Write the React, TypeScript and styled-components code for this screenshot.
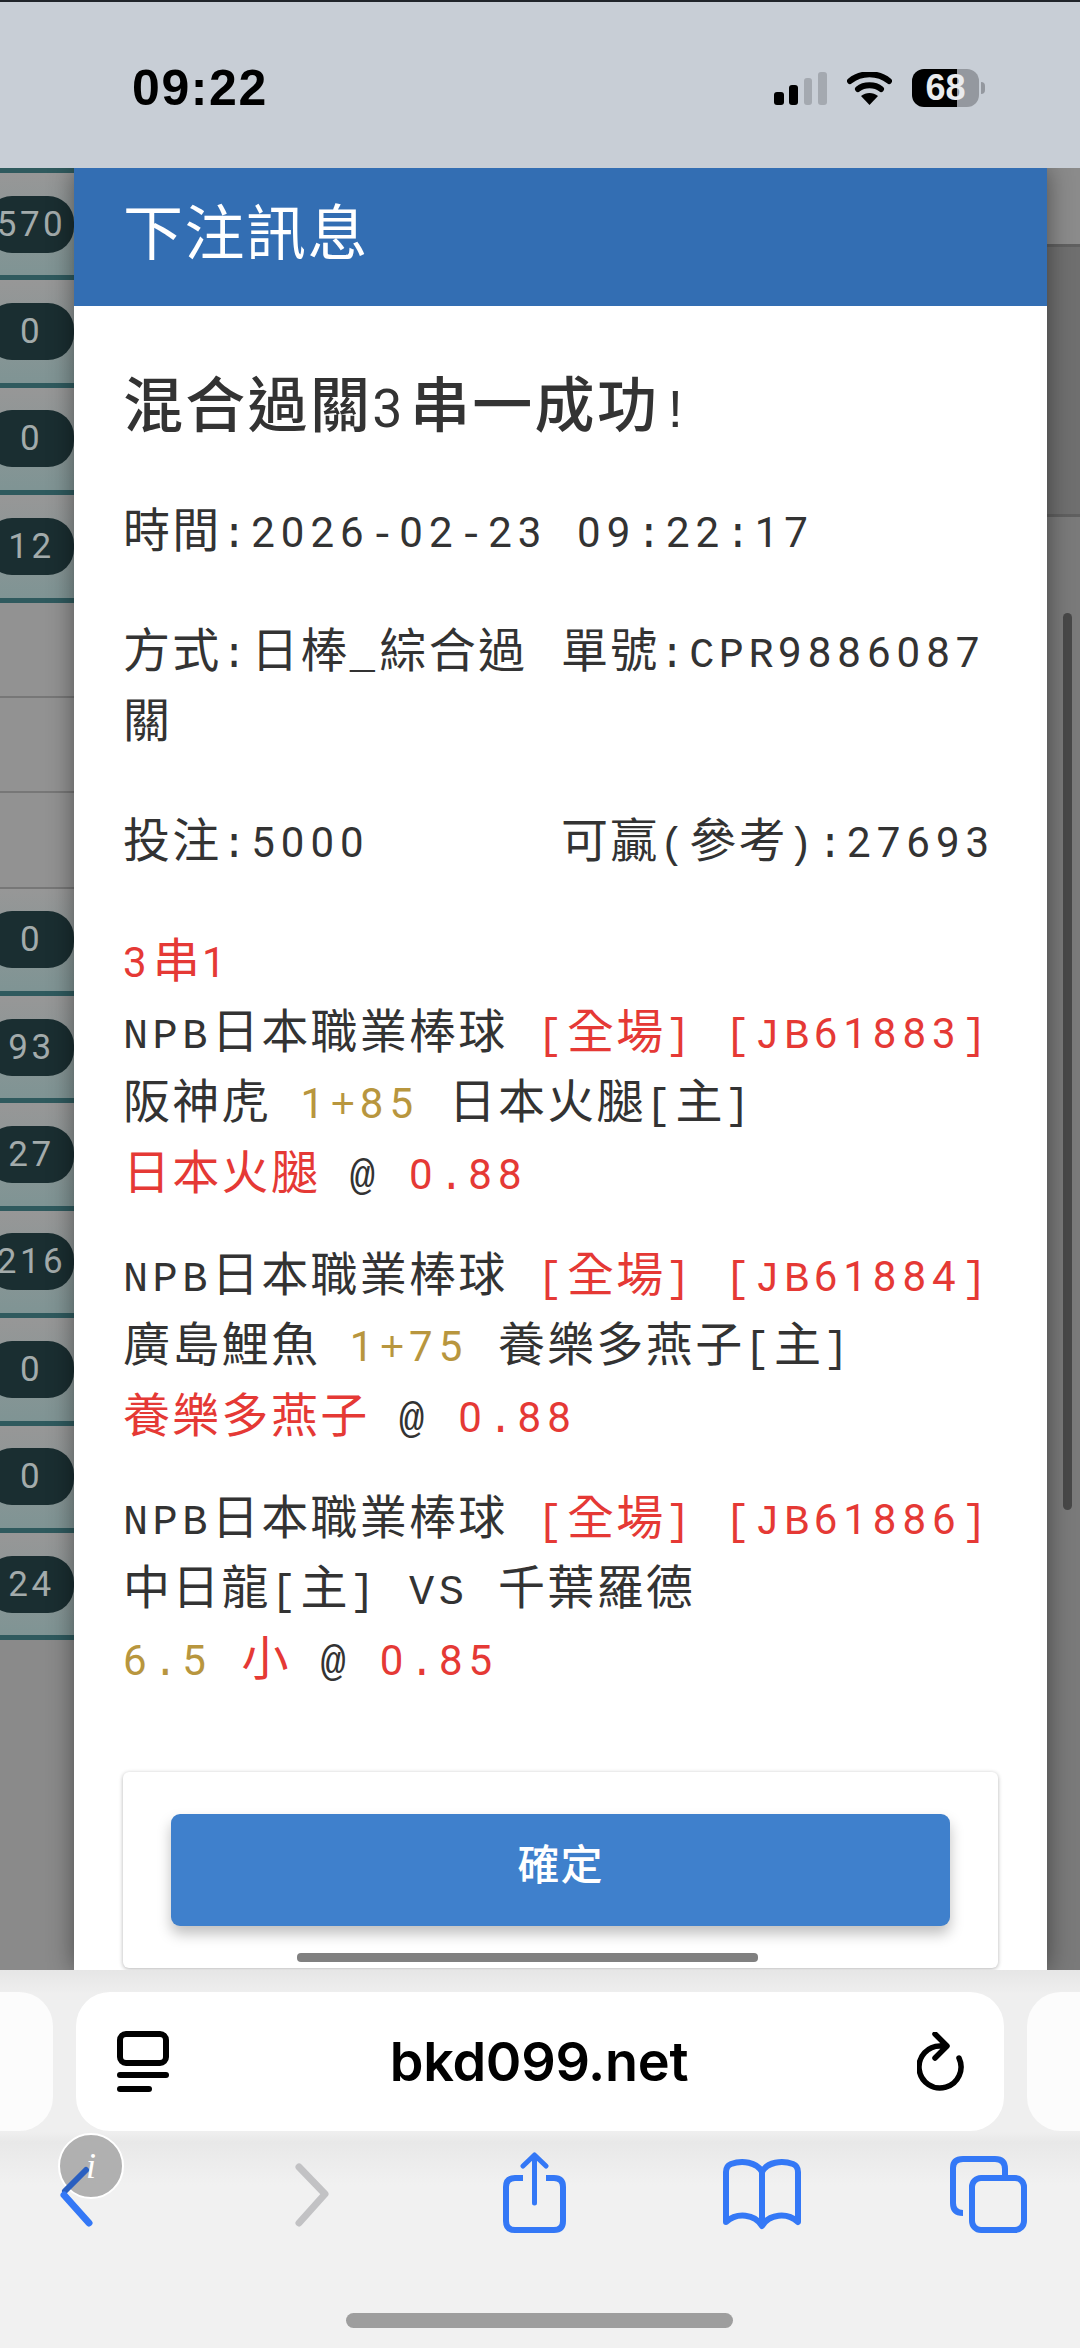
import React from "react";
import styled, { createGlobalStyle } from "styled-components";

const cjk = `"Noto Sans CJK TC", "Noto Sans CJK SC", sans-serif`;

const GlobalStyle = createGlobalStyle`
  html, body {
    margin: 0;
    padding: 0;
    background: #f1f1f1;
  }
  * {
    box-sizing: border-box;
  }
`;

const Page = styled.div`
  width: 1080px;
  height: 2348px;
  display: flex;
  flex-direction: column;
  overflow: hidden;
  font-family: ${cjk};
`;

/* status bar */
const StatusBar = styled.div`
  height: 168px;
  flex: none;
  background: #c8ced6;
  border-top: 2px solid #20242a;
  padding: 67px 101px 0 132px;
  display: flex;
  justify-content: space-between;
  align-items: flex-start;
`;
const Clock = styled.div`
  font: 700 50px/38px "Liberation Sans", sans-serif;
  letter-spacing: 1.6px;
  color: #000;
`;
const StatusIcons = styled.div`
  display: flex;
  align-items: center;
  gap: 20px;
  height: 38px;
`;
const Battery = styled.div`
  position: relative;
  width: 67px;
  height: 38px;
  border-radius: 12px;
  background: linear-gradient(90deg, #000 67%, #94989f 67%);
  color: #e9ebee;
  font: 700 36px/38px "Liberation Sans", sans-serif;
  text-align: center;
  &::after {
    content: "";
    position: absolute;
    left: 69px;
    top: 13px;
    width: 4px;
    height: 12px;
    border-radius: 0 6px 6px 0;
    background: #94989f;
  }
`;

/* dimmed page behind the dialog */
const Main = styled.div`
  height: 1802px;
  flex: none;
  display: flex;
  overflow: hidden;
`;
const LeftStrip = styled.div`
  width: 74px;
  flex: none;
  display: flex;
  flex-direction: column;
  overflow: hidden;
  background: #8a8a8a;
  border-top: 5px solid #2f5a5e;
`;
const ScoreRow = styled.div`
  height: 107.4px;
  flex: none;
  display: flex;
  align-items: center;
  border-bottom: 5px solid #2f5a5e;
  background: linear-gradient(#979797, #7f9494);
`;
const Pill = styled.div`
  width: 88px;
  height: 57px;
  flex: none;
  margin-left: -14px;
  padding-left: 3px;
  border-radius: 26px;
  background: #1a2e31;
  color: #a3abab;
  font: 400 35px/57px Roboto, sans-serif;
  letter-spacing: 3.5px;
  text-align: center;
`;
const PlainRow = styled.div<{ $h: number }>`
  height: ${(p) => p.$h}px;
  flex: none;
  border-bottom: 2px solid #777;
  background: #929292;
`;
const Rest = styled.div`
  flex: 1;
  background: #8a8a8a;
`;

const Dialog = styled.div`
  width: 973px;
  flex: none;
  display: flex;
  flex-direction: column;
  background: #fff;
  box-shadow: 0 0 24px rgba(0, 0, 0, 0.45);
  z-index: 1;
`;
const DialogHeader = styled.div`
  height: 138px;
  flex: none;
  padding: 0 49px;
  background: #336eb3;
  color: #fff;
  font-size: 60px;
  letter-spacing: 1.5px;
  line-height: 122px;
`;
const DialogBody = styled.div`
  flex: 1;
  min-height: 0;
  padding: 60px 30px 0 49px;
  color: #333;
  font-size: 47px;
  line-height: 70.5px;
  letter-spacing: 2.3px;
  white-space: pre-wrap;
`;
const Title = styled.div`
  font-size: 60px;
  font-weight: 500;
  letter-spacing: 2.3px;
  margin-bottom: 55px;
`;
const Field = styled.div`
  margin-bottom: 49.5px;
`;
const FieldGrid = styled.div`
  display: grid;
  grid-template-columns: 438px 1fr;
  margin-bottom: 49.5px;
`;
const BetBlock = styled.div`
  margin-bottom: 31.5px;
`;
const Digit = styled.span`
  font-family: Roboto, sans-serif;
  font-size: 0.894em;
  font-weight: 400;
  letter-spacing: 0.143em;
  line-height: 0;
`;
const Mono = styled.span`
  font-family: "Liberation Mono", monospace;
  font-size: 0.894em;
  letter-spacing: 0.105em;
  line-height: 0;
`;
const Red = styled.span`
  color: #e53935;
`;
const Gold = styled.span`
  color: #b8963e;
`;
const Footer = styled.div`
  position: relative;
  height: 196px;
  flex: none;
  margin: 0 49px 2px;
  padding: 42px 48px 0;
  background: #fff;
  border-radius: 6px;
  box-shadow: 0 1px 4px rgba(0, 0, 0, 0.3);
`;
const ConfirmButton = styled.button`
  display: block;
  width: 100%;
  height: 112px;
  border: 0;
  border-radius: 9px;
  padding: 0 0 18px;
  background: #3f80cc;
  color: #fff;
  font-family: ${cjk};
  font-size: 42px;
  font-weight: 500;
  letter-spacing: 1px;
  box-shadow: 0 8px 14px rgba(0, 0, 0, 0.25);
`;
const FooterScroll = styled.div`
  position: absolute;
  left: 174px;
  bottom: 6px;
  width: 461px;
  height: 9px;
  border-radius: 4px;
  background: #808080;
`;

const RightStrip = styled.div`
  position: relative;
  flex: 1;
  display: flex;
  flex-direction: column;
  background: #7a7a7a;
`;
const RightTop = styled.div`
  height: 76px;
  background: #8b8b8b;
`;
const RightMid = styled.div`
  height: 273px;
  background: #6f6f6f;
  border-top: 3px solid #606060;
  border-bottom: 3px solid #606060;
`;
const ScrollThumb = styled.div`
  position: absolute;
  left: 16px;
  top: 445px;
  width: 9px;
  height: 897px;
  border-radius: 5px;
  background: #484848;
`;

/* safari chrome */
const Chrome = styled.div`
  flex: 1;
  display: flex;
  flex-direction: column;
  background: linear-gradient(#e6e6e6, #efefef 24px, #efefef 162px, #e8e8e8 172px, #f1f1f1 215px);
`;
const TabStrip = styled.div`
  display: flex;
  gap: 23px;
  margin-top: 22px;
  height: 139px;
`;
const SideTab = styled.div<{ $side: "left" | "right" }>`
  width: 53px;
  flex: none;
  background: #fcfcfc;
  border-radius: ${(p) => (p.$side === "left" ? "0 34px 34px 0" : "34px 0 0 34px")};
`;
const UrlBar = styled.div`
  flex: 1;
  display: flex;
  align-items: center;
  justify-content: space-between;
  padding: 0 39px 0 41px;
  background: #fff;
  border-radius: 34px;
`;
const UrlText = styled.div`
  position: relative;
  left: -4px;
  font: 600 54px/1 Inter, "Liberation Sans", sans-serif;
  letter-spacing: -0.3px;
  color: #000;
`;
const Toolbar = styled.div`
  position: relative;
  display: grid;
  grid-template-columns: 235px 208px 219px 228px 77px;
  margin-top: 21px;
  padding-left: 60px;
  height: 81px;
`;
const InfoDisc = styled.div`
  position: absolute;
  left: 58px;
  top: -19px;
  width: 66px;
  height: 66px;
  border-radius: 50%;
  border: 2px solid #fff;
  background: #b0b0b0;
`;
const InfoMark = styled.div`
  position: absolute;
  left: 58px;
  top: -19px;
  width: 66px;
  color: #fff;
  font: italic 400 36px/66px "Liberation Serif", serif;
  text-align: center;
`;
const ToolIcon = styled.svg`
  position: relative;
  display: block;
  height: 81px;
`;
const HomeIndicator = styled.div`
  width: 387px;
  height: 15px;
  margin: 80px 0 0 346px;
  border-radius: 8px;
  background: #9e9e9e;
`;

// latin text: digits in Roboto (plain zero), the rest of the ascii in the mono face
function T({ children }: { children: string }) {
  const parts = children.split(/([0-9]+|[\x20-\x2f\x3a-\x7e]+)/);
  return (
    <>
      {parts.map((part, i) => {
        if (i % 2 === 0) return part;
        return /^[0-9]/.test(part) ? <Digit key={i}>{part}</Digit> : <Mono key={i}>{part}</Mono>;
      })}
    </>
  );
}

const topPills = ["570", "0", "0", "12"];
const lowerPills = ["0", "93", "27", "216", "0", "0", "24"];

const blue = "#3478f6";

function BetHead({ code }: { code: string }) {
  return (
    <div>
      <T>NPB日本職業棒球 </T>
      <Red>
        <T>{`[全場] [JB${code}]`}</T>
      </Red>
    </div>
  );
}

export default function App() {
  return (
    <Page>
      <GlobalStyle />
      <StatusBar>
        <Clock>09:22</Clock>
        <StatusIcons>
          <svg width="53" height="33" viewBox="0 0 53 33">
            <rect x="0" y="20" width="10" height="13" rx="3" fill="#000" />
            <rect x="15" y="13" width="9" height="20" rx="3" fill="#000" />
            <rect x="30" y="6" width="8" height="27" rx="3" fill="#a4a9b0" />
            <rect x="44" y="0" width="9" height="33" rx="3" fill="#a4a9b0" />
          </svg>
          <svg width="45" height="33" viewBox="0 0 45 33">
            <path d="M3 9 C14 0 31 0 42 9" fill="none" stroke="#000" strokeWidth="6" strokeLinecap="round" />
            <path d="M11 17 C17 12 28 12 34 17" fill="none" stroke="#000" strokeWidth="6" strokeLinecap="round" />
            <path d="M22.5 33 L14 24 C19 20 26 20 31 24 Z" fill="#000" />
          </svg>
          <Battery>68</Battery>
        </StatusIcons>
      </StatusBar>

      <Main>
        <LeftStrip>
          {topPills.map((v, i) => (
            <ScoreRow key={i}>
              <Pill>{v}</Pill>
            </ScoreRow>
          ))}
          <PlainRow $h={95} />
          <PlainRow $h={95} />
          <PlainRow $h={96} />
          {lowerPills.map((v, i) => (
            <ScoreRow key={i}>
              <Pill>{v}</Pill>
            </ScoreRow>
          ))}
          <Rest />
        </LeftStrip>

        <Dialog>
          <DialogHeader>下注訊息</DialogHeader>
          <DialogBody>
            <Title>
              <T>混合過關3串一成功!</T>
            </Title>
            <Field>
              <T>時間:2026-02-23 09:22:17</T>
            </Field>
            <FieldGrid>
              <div>
                <T>方式:日棒_綜合過關</T>
              </div>
              <div>
                <T>單號:CPR9886087</T>
              </div>
            </FieldGrid>
            <FieldGrid>
              <div>
                <T>投注:5000</T>
              </div>
              <div>
                <T>可贏(參考):27693</T>
              </div>
            </FieldGrid>
            <Red>
              <div>
                <T>3串1</T>
              </div>
            </Red>
            <BetBlock>
              <BetHead code="61883" />
              <div>
                <T>阪神虎 </T>
                <Gold>
                  <T>1+85</T>
                </Gold>
                <T> 日本火腿[主]</T>
              </div>
              <div>
                <Red>日本火腿</Red>
                <T> @ </T>
                <Red>
                  <T>0.88</T>
                </Red>
              </div>
            </BetBlock>
            <BetBlock>
              <BetHead code="61884" />
              <div>
                <T>廣島鯉魚 </T>
                <Gold>
                  <T>1+75</T>
                </Gold>
                <T> 養樂多燕子[主]</T>
              </div>
              <div>
                <Red>養樂多燕子</Red>
                <T> @ </T>
                <Red>
                  <T>0.88</T>
                </Red>
              </div>
            </BetBlock>
            <BetBlock>
              <BetHead code="61886" />
              <div>
                <T>中日龍[主] VS 千葉羅德</T>
              </div>
              <div>
                <Gold>
                  <T>6.5</T>
                </Gold>
                <T> </T>
                <Red>小</Red>
                <T> @ </T>
                <Red>
                  <T>0.85</T>
                </Red>
              </div>
            </BetBlock>
          </DialogBody>
          <Footer>
            <ConfirmButton>確定</ConfirmButton>
            <FooterScroll />
          </Footer>
        </Dialog>

        <RightStrip>
          <RightTop />
          <RightMid />
          <ScrollThumb />
        </RightStrip>
      </Main>

      <Chrome>
        <TabStrip>
          <SideTab $side="left" />
          <UrlBar>
            <svg width="52" height="61" viewBox="0 0 52 61">
              <rect x="3" y="3" width="46" height="29" rx="6" fill="none" stroke="#000" strokeWidth="6" />
              <rect x="0" y="41" width="52" height="6" rx="3" fill="#000" />
              <rect x="0" y="55" width="35" height="6" rx="3" fill="#000" />
            </svg>
            <UrlText>bkd099.net</UrlText>
            <svg width="48" height="60" viewBox="0 0 48 60">
              <path
                d="M42 26 A21 21 0 1 1 24 14 M18 2 L30 14 L18 26"
                fill="none"
                stroke="#000"
                strokeWidth="5.5"
                strokeLinecap="round"
                strokeLinejoin="round"
              />
            </svg>
          </UrlBar>
          <SideTab $side="right" />
        </TabStrip>

        <Toolbar>
          <InfoDisc />
          <ToolIcon width="33" viewBox="0 0 33 81">
            <path d="M26 18 L5 39" fill="none" stroke="#2a5fc0" strokeWidth="6" strokeLinecap="round" />
            <path d="M4 43 L29 71" fill="none" stroke={blue} strokeWidth="7" strokeLinecap="round" />
          </ToolIcon>
          <InfoMark>i</InfoMark>
          <ToolIcon width="34" viewBox="0 0 34 81">
            <path
              d="M4 15 L30 42 L4 71"
              fill="none"
              stroke="#c2c2c4"
              strokeWidth="7"
              strokeLinecap="round"
              strokeLinejoin="round"
            />
          </ToolIcon>
          <ToolIcon width="63" viewBox="0 0 63 81">
            <path
              d="M20 26 H12 Q3 26 3 35 V69 Q3 78 12 78 H51 Q60 78 60 69 V35 Q60 26 51 26 H43"
              fill="none"
              stroke={blue}
              strokeWidth="6"
            />
            <path
              d="M31.5 51 V4 M20 14 L31.5 3 L43 14"
              fill="none"
              stroke={blue}
              strokeWidth="5"
              strokeLinecap="round"
              strokeLinejoin="round"
            />
          </ToolIcon>
          <ToolIcon width="80" viewBox="0 0 80 81">
            <path
              d="M40 20 C35 10 20 8 9 12 Q4 14 4 20 V70 C15 60 33 62 40 74 C47 62 65 60 76 70 V20 Q76 14 71 12 C60 8 45 10 40 20 V70"
              fill="none"
              stroke={blue}
              strokeWidth="6"
              strokeLinejoin="round"
            />
          </ToolIcon>
          <ToolIcon width="77" viewBox="0 0 77 81">
            <path d="M13 61 Q3 61 3 51 V16 Q3 7 13 7 H45 Q55 7 55 17 V24" fill="none" stroke={blue} strokeWidth="6" />
            <rect x="22" y="26" width="52" height="52" rx="9" fill="none" stroke={blue} strokeWidth="6" />
          </ToolIcon>
        </Toolbar>
        <HomeIndicator />
      </Chrome>
    </Page>
  );
}
